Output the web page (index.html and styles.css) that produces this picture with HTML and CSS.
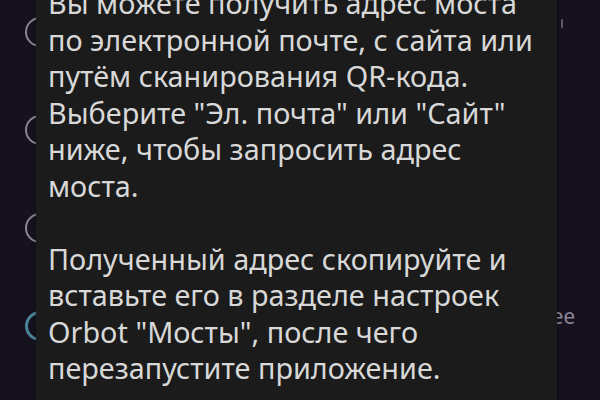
FILE: index.html
```html
<!DOCTYPE html>
<html lang="ru">
<head>
<meta charset="utf-8">
<link rel="stylesheet" href="styles.css">
</head>
<body>
<div class="screen">
  <div class="options">
    <div class="option"><span class="radio"></span></div>
    <div class="option"><span class="radio"></span></div>
    <div class="option"><span class="radio"></span></div>
    <div class="option"><span class="radio selected"></span><span class="hint">Подробнее</span></div>
  </div>
  <div class="side-mark"></div>
  <div class="dialog">
    <p class="msg">Вы можете получить адрес моста по электронной почте, с сайта или путём сканирования QR-кода. Выберите "Эл. почта" или "Сайт" ниже, чтобы запросить адрес моста.</p>
    <p class="msg">Полученный адрес скопируйте и вставьте его в разделе настроек Orbot "Мосты", после чего перезапустите приложение.</p>
  </div>
</div>
</body>
</html>
```
FILE: styles.css
```css
html, body {
  margin: 0;
  padding: 0;
  background: #15111e;
  overflow: hidden;
}
.screen {
  position: relative;
  width: 600px;
  height: 400px;
  overflow: hidden;
  font-family: "Noto Sans", "Open Sans", sans-serif;
}
.options {
  display: flex;
  flex-direction: column;
  padding-top: 17px;
  padding-left: 25px;
  gap: 68px;
}
.option {
  display: flex;
  align-items: center;
  justify-content: space-between;
  height: 30px;
}
.radio {
  width: 26px;
  height: 26px;
  border: 2px solid #8a8494;
  border-radius: 50%;
  flex: none;
}
.radio.selected {
  border: 3px solid #4a8498;
  width: 24px;
  height: 24px;
}
.hint {
  margin-right: 25px;
  margin-bottom: 20px;
  font-size: 21px;
  color: #8b8596;
}
.side-mark {
  position: absolute;
  left: 561px;
  top: 19px;
  width: 2px;
  height: 9px;
  background: #5d5868;
  border-radius: 1px;
}
.dialog {
  position: absolute;
  left: 36px;
  top: -31px;
  width: 521px;
  height: 440px;
  box-sizing: border-box;
  padding: 16px 12px 0 12px;
  background: #1b1b1b;
  box-shadow: 0 0 4px rgba(0,0,0,0.4);
}
.msg {
  margin: 0 0 36.5px 0;
  font-size: 28.8px;
  line-height: 36.5px;
  color: #d8d8d8;
}
```
